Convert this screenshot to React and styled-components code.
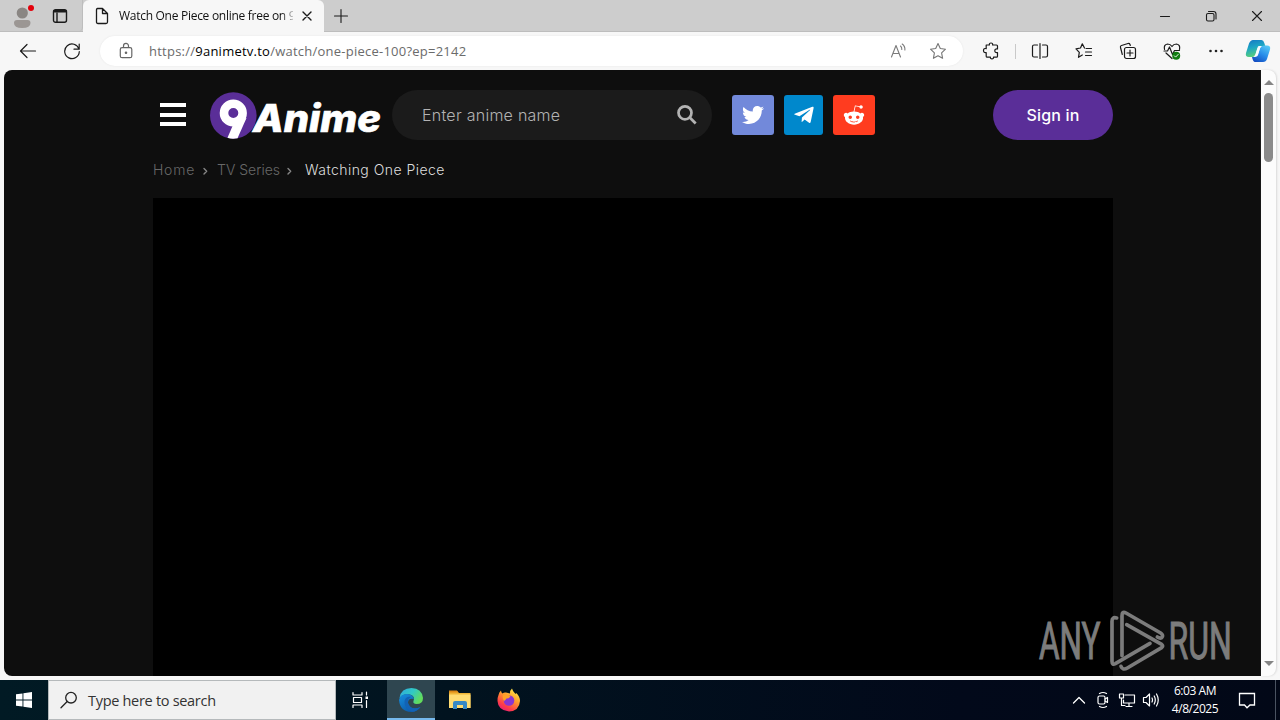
import React from "react";
import styled, { createGlobalStyle } from "styled-components";
import { FaTwitter, FaTelegramPlane, FaRedditAlien } from "react-icons/fa";

const GlobalStyle = createGlobalStyle`
  * { box-sizing: border-box; }
  body { margin: 0; overflow: hidden; background: #f7f7f7; }
`;

const ui = `"Open Sans", "Noto Sans", sans-serif`;
const site = `"Inter", "Open Sans", sans-serif`;

const Desktop = styled.div`
  position: relative;
  display: flex;
  flex-direction: column;
  width: 1280px;
  height: 720px;
  overflow: hidden;
  font-family: ${ui};
`;

const Icon = styled.svg`
  display: block;
  flex: none;
  width: ${(p) => p.$w || 20}px;
  height: ${(p) => p.$h || p.$w || 20}px;
  fill: none;
  stroke: ${(p) => p.$color || "#1b1b1b"};
  stroke-width: ${(p) => p.$stroke || 1.1};
  stroke-linecap: round;
  stroke-linejoin: round;
`;

const Slot = styled.div`
  flex: none;
  display: flex;
  align-items: center;
  justify-content: center;
  width: ${(p) => p.$w}px;
  height: 100%;
`;

/* Browser chrome */
const TabBar = styled.header`
  flex: none;
  display: flex;
  height: 32px;
  background: #cdcdcd;
  border-bottom: 1px solid #bdbdbd;
`;

const TabTools = styled.div`
  display: flex;
  width: 83px;
  height: 31px;
  border-right: 1px solid #bdbdbd;
  border-bottom-right-radius: 4px;
`;

const Tab = styled.div`
  display: flex;
  align-items: center;
  width: 241px;
  height: 32px;
  padding-left: 12px;
  background: #f7f7f7;
  border-radius: 6px 6px 0 0;
`;

const TabTitle = styled.div`
  width: 174px;
  margin-left: 10px;
  white-space: nowrap;
  font-size: 12px;
  line-height: 18px;
  letter-spacing: -0.28px;
  color: #111;
  mask-image: linear-gradient(90deg, #000 162px, transparent 178px);
`;

const WindowControls = styled.div`
  display: flex;
  margin-left: auto;
`;

const Toolbar = styled.div`
  flex: none;
  display: flex;
  align-items: center;
  height: 38px;
  padding-left: 6px;
  background: #f7f7f7;
`;

const AddressBar = styled.div`
  display: flex;
  align-items: center;
  width: 863px;
  height: 30px;
  margin-left: 6px;
  padding-left: 6px;
  border-radius: 15px;
  background: #fff;
  box-shadow: 0 0 2px #e4e4e4;
`;

const Url = styled.div`
  flex: 1;
  margin-left: 3px;
  font-size: 13px;
  line-height: 20px;
  letter-spacing: 0.24px;
  color: #6b6b6b;
  b { font-weight: 400; color: #000; }
`;

const Divider = styled.i`
  width: 1px;
  height: 15px;
  margin: 0 2px;
  background: #c9c9c9;
`;

/* Page */
const Viewport = styled.div`
  flex: none;
  display: flex;
  height: 610px;
  padding: 0 4px 4px;
  background: #f7f7f7;
`;

const Page = styled.main`
  width: 1257px;
  height: 606px;
  padding: 20px 148px 0 149px;
  border-radius: 8px 0 0 8px;
  background: #0e0e0e;
  overflow: hidden;
  font-family: ${site};
`;

const Scrollbar = styled.div`
  display: flex;
  flex-direction: column;
  align-items: center;
  width: 15px;
  height: 606px;
  padding: 8px 0 10px;
  border-radius: 0 8px 8px 0;
  background: #fcfcfc;
  box-shadow: 1px 0 2px #d9d9d9;
`;

const Arrow = styled.i`
  width: 0;
  height: 0;
  border: 5px solid transparent;
  border-top-width: ${(p) => (p.$up ? 0 : 5)}px;
  border-bottom-width: ${(p) => (p.$up ? 5 : 0)}px;
  border-${(p) => (p.$up ? "bottom" : "top")}-color: #858585;
  margin-top: ${(p) => (p.$up ? "2px" : "auto")};
`;

const Thumb = styled.div`
  width: 9px;
  height: 69px;
  margin-top: 8px;
  border-radius: 5px;
  background: #8b8b8b;
`;

const SiteHeader = styled.div`
  display: flex;
  align-items: center;
  height: 50px;
`;

const MenuButton = styled.div`
  display: flex;
  flex-direction: column;
  justify-content: space-between;
  width: 26px;
  height: 23px;
  margin: 0 24px 1px 7px;
`;

const MenuBar = styled.i`
  height: 4px;
  background: #fff;
`;

const Logo = styled.svg`
  flex: none;
  width: 172px;
  height: 48px;
  overflow: visible;
  font-family: "Inter", sans-serif;
  font-style: italic;
  font-weight: 800;
`;

const SearchBox = styled.div`
  display: flex;
  align-items: center;
  justify-content: space-between;
  width: 320px;
  height: 50px;
  margin-left: 10px;
  padding: 0 14px 0 30px;
  border-radius: 25px;
  background: #1b1b1b;
  color: #b3b3b3;
  font-size: 16px;
  font-weight: 300;
  letter-spacing: 0.26px;
`;

const SocialList = styled.div`
  display: flex;
  gap: 10px;
  margin-left: 20px;
`;

const Social = styled.div`
  display: flex;
  align-items: center;
  justify-content: center;
  width: ${(p) => p.$w}px;
  height: 40px;
  border-radius: 3px;
  background: ${(p) => p.$bg};
  color: #fff;
  font-size: ${(p) => p.$size || 22}px;
`;

const SignIn = styled.div`
  width: 120px;
  height: 50px;
  margin-left: auto;
  border-radius: 25px;
  background: #5a2e98;
  color: #fff;
  font-size: 16px;
  font-weight: 500;
  line-height: 50px;
  letter-spacing: 0.15px;
  text-align: center;
`;

const Breadcrumb = styled.nav`
  display: flex;
  align-items: center;
  height: 22px;
  margin-top: 19px;
  font-size: 14px;
  font-weight: 300;
`;

const Crumb = styled.span`
  flex: none;
  width: ${(p) => p.$w}px;
  margin-bottom: 1px;
  white-space: nowrap;
  letter-spacing: ${(p) => p.$track}px;
  color: ${(p) => (p.$current ? "#dedede" : "#686868")};
`;

const Player = styled.div`
  width: 960px;
  height: 480px;
  margin-top: 17px;
  background: #000;
`;

const Watermark = styled.svg`
  position: absolute;
  left: 1038px;
  top: 608px;
  width: 198px;
  height: 66px;
  overflow: visible;
  fill: #7c7c7c;
  font-family: Roboto, sans-serif;
  font-size: 52px;
`;

/* Taskbar */
const Taskbar = styled.footer`
  flex: none;
  display: flex;
  height: 40px;
  background: linear-gradient(90deg, #011a24 0, #01131f 35%, #02091a 75%, #020817 100%);
`;

const TaskSearch = styled.div`
  display: flex;
  align-items: center;
  width: 288px;
  height: 40px;
  padding-left: 11px;
  border: 1px solid #b5b9bb;
  background: #f1f1f1;
  color: #333;
  font-size: 14.5px;
  letter-spacing: -0.3px;
`;

const SearchLabel = styled.span`
  margin-left: 10px;
`;

const TaskItem = styled.div`
  display: flex;
  align-items: center;
  justify-content: center;
  width: ${(p) => p.$w || 48}px;
  height: 40px;
  padding-top: ${(p) => (p.$active ? 2 : 0)}px;
  padding-right: ${(p) => p.$pr || 0}px;
  background: ${(p) => (p.$active ? "#2f4650" : "transparent")};
  border-bottom: ${(p) => (p.$active ? "2px solid #76b9ed" : "0")};
`;

const Tray = styled.div`
  display: flex;
  margin-left: auto;
  padding-right: 8px;
  border-right: 1px solid #4a5361;
  margin-right: 4px;
`;

const Clock = styled.div`
  width: 64px;
  padding-top: 2px;
  color: #fff;
  font-size: 12px;
  line-height: 18px;
  letter-spacing: -0.45px;
  text-align: center;
`;

function App() {
  return (
    <Desktop>
      <GlobalStyle />
      <TabBar>
        <TabTools>
          <Slot $w={44}>
            <Icon $w={24} $h={28} $color="none">
              <circle cx="12.3" cy="11" r="5.6" fill="#8a8683" />
              <path d="M4 21q0-3 3-3h10.500q3 0 3 3q0 5-8.300 5T4 21z" fill="#9b9693" />
              <circle cx="21" cy="6" r="3" fill="#e3000b" />
            </Icon>
          </Slot>
          <Slot $w={32}>
            <Icon $w={16} $stroke={1.4}>
              <rect x="1.500" y="1.700" width="13" height="12.600" rx="2" />
              <path d="M2.500 3.200h11" strokeWidth="2.600" />
              <path d="M5 5v9" />
            </Icon>
          </Slot>
        </TabTools>
        <Tab>
          <Icon $w={14} $h={18} $stroke={1.3}>
            <path d="M2.500 1.500h5l5 5v8.500q0 1.500-1.500 1.500H3q-1.500 0-1.500-1.500V3q0-1.500 1-1.500zM7.500 1.500v5h5" />
          </Icon>
          <TabTitle>Watch One Piece online free on 9</TabTitle>
          <Slot $w={28}>
            <Icon $w={10} $stroke={1.4}><path d="M1 1l8 8M9 1L1 9" /></Icon>
          </Slot>
        </Tab>
        <Slot $w={34}>
          <Icon $w={16}><path d="M8 1.500v13M1.500 8h13" /></Icon>
        </Slot>
        <WindowControls>
          <Slot $w={46}><Icon $w={12}><path d="M1.500 6.500h9" /></Icon></Slot>
          <Slot $w={46}>
            <Icon $w={12}>
              <rect x="1.500" y="3.500" width="7.500" height="7.500" rx="1.500" />
              <path d="M3.500 1.500H8.500q2.500 0 2.500 2.500v5" />
            </Icon>
          </Slot>
          <Slot $w={46}><Icon $w={12}><path d="M1.500 1.500l9 9M10.500 1.500l-9 9" /></Icon></Slot>
        </WindowControls>
      </TabBar>

      <Toolbar>
        <Slot $w={44}>
          <Icon $w={18} $stroke={1.2}><path d="M16.500 9H1.500M8 2.500L1.500 9L8 15.500" /></Icon>
        </Slot>
        <Slot $w={44}>
          <Icon $w={18} $stroke={1.2}><path d="M16 7.200A7.300 7.300 0 1 0 16.300 9.500M16.200 2v5.200h-5.200" /></Icon>
        </Slot>
        <AddressBar>
          <Slot $w={40}>
            <Icon $w={16} $h={18} $color="#666" $stroke={1.2}>
              <rect x="2.300" y="5.700" width="11.500" height="10" rx="1.800" />
              <path d="M5.500 5.500V4a2.500 2.700 0 0 1 5 0v1.500" />
              <circle cx="8" cy="10.700" r="0.700" fill="#666" />
            </Icon>
          </Slot>
          <Url>https://<b>9animetv.to</b>/watch/one-piece-100?ep=2142</Url>
          <Slot $w={40}>
            <Icon $w={18} $color="#7b7b7b">
              <path d="M2.500 15L7 3.500L11.500 15M4.200 11.500h5.800M11.500 4q1.500 1.300 1.300 3.500M13.200 2q3 2.200 2.700 6" />
            </Icon>
          </Slot>
          <Slot $w={40}>
            <Icon $w={18} $color="#767676">
              <path d="M9 1.500l2.300 5 5.200.7-3.900 3.700 1 5.400L9 13.700l-4.600 2.600 1-5.400L1.500 7.200l5.200-.7z" />
            </Icon>
          </Slot>
          <Slot $w={5} />
        </AddressBar>
        <Slot $w={6} />
        <Slot $w={44}>
          <Icon $w={18} $stroke={1.2}>
            <path d="M4.200 3h3.200q-.4-2 1.600-2t1.600 2h3.900q1 0 1 1v2.900q-2.700-.4-2.700 1.800t2.700 1.800v3.700q0 1-1 1h-3q.3 1.600-1.500 1.600t-1.600-1.600H5.200q-1 0-1-1v-3.600q-2.700.5-2.700-2t2.700-2z" />
          </Icon>
        </Slot>
        <Divider />
        <Slot $w={44}>
          <Icon $w={18} $stroke={1.2}>
            <path d="M6.500 3H3Q1.500 3 1.500 4.500v9Q1.500 15 3 15h3.500M11.500 3H15q1.500 0 1.500 1.500v9Q16.500 15 15 15h-3.500M9 1.500v15" />
          </Icon>
        </Slot>
        <Slot $w={44}>
          <Icon $w={18} $stroke={1.2}>
            <path d="M11 6.500H16.500M10.500 10H16.500M10.500 13.500H16.500M9.500 6L7.300 1.800L5.500 6L1 6.800l3.300 3.500-.8 5L7.300 13" />
          </Icon>
        </Slot>
        <Slot $w={44}>
          <Icon $w={18} $stroke={1.2}>
            <rect x="5.500" y="5.500" width="11" height="11" rx="2" />
            <path d="M11 8v6M8 11h6M3.300 12.500L1.500 5.500q-.5-1.500 1-2L9 1.500q1.500-.3 2 1l.3 1" />
          </Icon>
        </Slot>
        <Slot $w={44}>
          <Icon $w={18} $stroke={1.2}>
            <path d="M1.500 7.500Q.5 2.500 4.500 2q3 0 4.500 2.500Q10.500 2 13.500 2q4 .5 3 5.500M1 9h3.500l2-4 3 7.500 2-4h5M3 11l6 5.500" />
            <circle cx="13.200" cy="13.700" r="4" fill="#107c10" stroke="none" />
            <path d="M11.300 13.800l1.300 1.300 2.600-2.700" stroke="#fff" strokeWidth="0.900" />
          </Icon>
        </Slot>
        <Slot $w={44}>
          <Icon $w={16} $color="none">
            <g fill="#222"><circle cx="2.500" cy="8" r="1.300" /><circle cx="8" cy="8" r="1.300" /><circle cx="13.500" cy="8" r="1.300" /></g>
          </Icon>
        </Slot>
        <Slot $w={40}>
          <Icon $w={26} viewBox="0 0 26 26" $color="none">
            <defs>
              <linearGradient id="copA" x1="0" y1="0" x2="0.300" y2="1">
                <stop offset="0" stopColor="#1474c4" /><stop offset="0.500" stopColor="#1ca6c4" /><stop offset="1" stopColor="#58cf7b" />
              </linearGradient>
              <linearGradient id="copB" x1="0.800" y1="0" x2="0.200" y2="1">
                <stop offset="0" stopColor="#54c8f5" /><stop offset="0.500" stopColor="#278dea" /><stop offset="1" stopColor="#124bc0" />
              </linearGradient>
            </defs>
            <path d="M8 2h8.500q2 0 2.800 3l1 3h-5q-2 0-3 3l-2 6q-1 2-3 2H4q-4 0-3-4l3-9.500Q5.500 2 8 2z" fill="url(#copA)" />
            <path d="M19 7.500h3q4 0 3 4l-3 9.500q-1 3-4 3h-8q-2 0-3-5h3q2 0 3-3l2-6q1-2.500 4-2.500z" fill="url(#copB)" />
            <path d="M14 8h2.500q-1 1-1.500 2.500L13 17q-.6 1.500-2 1.500H8.800q1.200-.7 1.700-2.300l1.800-6q.5-2.200 1.700-2.200z" fill="#f6fbff" />
          </Icon>
        </Slot>
      </Toolbar>

      <Viewport>
        <Page>
          <SiteHeader>
            <MenuButton><MenuBar /><MenuBar /><MenuBar /></MenuButton>
            <Logo viewBox="0 0 172 48">
              <circle cx="23.300" cy="24.500" r="23.300" fill="#5a2e98" />
              <circle cx="23.300" cy="22" r="9.300" fill="none" stroke="#fff" strokeWidth="8.600" />
              <path d="M27 29L36.500 27L27.500 47.300Q22 48.500 17.500 46.800L23 34z" fill="#fff" />
              <text x="43" y="41.300" fill="#fff" stroke="#fff" strokeWidth="0.700" fontSize="38" textLength="128" lengthAdjust="spacingAndGlyphs">Anime</text>
            </Logo>
            <SearchBox>
              Enter anime name
              <Icon $w={22} $color="#b3b3b3" $stroke={2.7}>
                <circle cx="9" cy="8.800" r="6.500" />
                <path d="M14 13.800l5.700 5.700" strokeLinecap="butt" />
              </Icon>
            </SearchBox>
            <SocialList>
              <Social $w={42} $bg="#7289da"><FaTwitter /></Social>
              <Social $w={39} $bg="#0088cc"><FaTelegramPlane /></Social>
              <Social $w={42} $bg="#ff3c1f"><FaRedditAlien /></Social>
            </SocialList>
            <SignIn>Sign in</SignIn>
          </SiteHeader>
          <Breadcrumb>
            <Crumb $w={50} $track={0.75}>Home</Crumb>
            <Icon $w={14} $h={10} $color="#858585" $stroke={1.4}><path d="M1 3.500l2.700 2.700L1 8.900" /></Icon>
            <Crumb $w={70} $track={0}>TV Series</Crumb>
            <Icon $w={18} $h={10} $color="#858585" $stroke={1.4}><path d="M1 3.500l2.700 2.700L1 8.900" /></Icon>
            <Crumb $current $track={0.46}>Watching One Piece</Crumb>
          </Breadcrumb>
          <Player />
        </Page>
        <Scrollbar>
          <Arrow $up />
          <Thumb />
          <Arrow />
        </Scrollbar>
      </Viewport>

      <Taskbar>
        <TaskItem>
          <Icon $w={16} $color="none">
            <path d="M0 2.300L6.500 1.400V7.600H0zM7.400 1.300L16 0v7.600H7.400zM0 8.400h6.500v6.200L0 13.700zM7.400 8.400H16V16l-8.600-1.300z" fill="#fff" />
          </Icon>
        </TaskItem>
        <TaskSearch>
          <Icon $w={18} $color="#222" $stroke={1.3}>
            <circle cx="11" cy="6.700" r="5.300" /><path d="M7.200 10.500L1 16.700" />
          </Icon>
          <SearchLabel>Type here to search</SearchLabel>
        </TaskSearch>
        <TaskItem $w={51} $pr={4}>
          <Icon $w={18} $color="#fff" $stroke={1.2}>
            <path d="M2 1.500v2.500h9V1.500M2 16.500V14h9v2.500M2.500 6.500h8v5h-8zM15.500 1v3M15.500 9.500V16.500" />
            <rect x="14.500" y="5.500" width="2.500" height="2.500" fill="#fff" stroke="none" />
          </Icon>
        </TaskItem>
        <TaskItem $active>
          <Icon $w={26} viewBox="0 0 26 26" $color="none">
            <defs>
              <linearGradient id="edgeG" x1="0" y1="0" x2="1" y2="0.500">
                <stop offset="0" stopColor="#2fa8e0" /><stop offset="0.550" stopColor="#31c9c5" /><stop offset="1" stopColor="#62dc5c" />
              </linearGradient>
              <linearGradient id="edgeB" x1="0" y1="0" x2="0.600" y2="1">
                <stop offset="0" stopColor="#168fdf" /><stop offset="1" stopColor="#0c59a8" />
              </linearGradient>
            </defs>
            <path d="M1.500 11Q3 1 13.500 1 24 1.500 25 11q0 6-6.500 6-4-.3-3-3 2-5-3.500-6.500Q5 6 1.500 11z" fill="url(#edgeG)" />
            <path d="M1 13Q2 7 9 7q6 .5 7 5-6-1.500-6 4 1 5.500 7 5.500 3 0 5.500-1.500-3.500 5-9.500 5Q2 24.500 1 13z" fill="url(#edgeB)" />
            <path d="M10 16q-1-4 3-6-5-1-6.500 4Q6 22 14 24.800q5-.3 8.500-4.800Q13 24 10 16z" fill="#1262b5" />
          </Icon>
        </TaskItem>
        <TaskItem $w={50}>
          <Icon $w={22} $color="none">
            <path d="M0 2h8l2 2h11.500v15H0z" fill="#f0b536" />
            <path d="M0 5.500h21.500V19H0z" fill="#ffdc72" />
            <path d="M0 1.500h8l1.500 2H0z" fill="#dd8a16" />
            <path d="M4 20v-6q0-2 2-2h10q2 0 2 2v6h-4v-4H8v4z" fill="#3789c5" />
          </Icon>
        </TaskItem>
        <TaskItem>
          <Icon $w={24} viewBox="0 0 24 24" $color="none">
            <defs>
              <linearGradient id="ffO" x1="0.800" y1="0" x2="0.200" y2="1">
                <stop offset="0" stopColor="#fff04a" /><stop offset="0.400" stopColor="#ff9b2c" /><stop offset="0.750" stopColor="#ff3d48" /><stop offset="1" stopColor="#e51880" />
              </linearGradient>
            </defs>
            <path d="M1.500 7Q2 4 4 2.500q0 2 1.500 3Q7 4 9 4.500q2 .3 4 1Q13 2 15 .500q.7 3 3.500 5.500l.7-1Q23 8.500 23 13q-.7 10-11 10.500Q1 22.500.5 13q0-4 1-6z" fill="url(#ffO)" />
            <circle cx="12" cy="12.500" r="5.300" fill="#8a35d1" />
            <path d="M6 7q4-1.500 7.500 1-1 2.500-4 2.500-1.500 2-2.500 2.500Q5 10 6 7z" fill="#ffa127" />
          </Icon>
        </TaskItem>
        <Tray>
          <Slot $w={24}><Icon $w={14} $color="#fff" $stroke={1.3}><path d="M1.500 10L7 4.500l5.500 5.500" /></Icon></Slot>
          <Slot $w={24}>
            <Icon $w={16} $h={18} $color="#fff" $stroke={1.2}>
              <rect x="3" y="5" width="7" height="8" rx="1.500" />
              <path d="M10 8l2.500-1.500v5L10 10M4.500 2.500Q8 .5 11.500 2.500M4.500 15.500q3.500 2 7 0" />
            </Icon>
          </Slot>
          <Slot $w={24}>
            <Icon $w={18} $color="#fff" $stroke={1.2}>
              <path d="M7 4h9.500v8H5.500V9M11 12v3M8 15.500h6M1.500 3h4v4h-4zM3.500 7v7.500H7" />
            </Icon>
          </Slot>
          <Slot $w={24}>
            <Icon $w={18} $color="#fff" $stroke={1.2}>
              <path d="M1.500 6.500H4L7.500 3v12L4 11.500H1.500zM10 7q1 2 0 4M12.200 5q2.200 4 0 8M14.500 3q3.500 6 0 12" />
            </Icon>
          </Slot>
          <Clock>6:03 AM<br />4/8/2025</Clock>
          <Slot $w={40}>
            <Icon $w={18} $color="#fff" $stroke={1.3}>
              <path d="M1.500 2.500h15v11.500h-4.500L9 16.800 6.500 14h-5z" strokeLinejoin="miter" />
            </Icon>
          </Slot>
        </Tray>
      </Taskbar>

      <Watermark viewBox="0 0 198 66">
        <g stroke="#7c7c7c" strokeWidth="1.100">
          <text transform="translate(1 51) scale(0.605 1)">ANY</text>
          <text transform="translate(130.500 51) scale(0.615 1)">RUN</text>
        </g>
        <g transform="translate(62 -4) scale(.33333)" fill="none" stroke="#7c7c7c" strokeWidth="11" strokeLinecap="round" strokeLinejoin="round">
          <path d="M50 42Q36 38 36 52V172Q36 184 46 179L150 118" />
          <path d="M66 155V36Q66 20 78 27L182 87Q192 94 185 101Q180 104 172 99" />
          <path d="M80 62L185 121Q191 126 185 131L82 192Q68 200 63 187" />
        </g>
      </Watermark>
    </Desktop>
  );
}

export default App;
